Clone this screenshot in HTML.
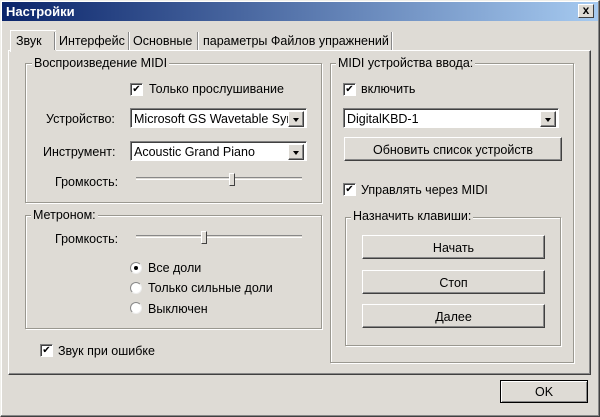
<!DOCTYPE html>
<html><head><meta charset="utf-8"><style>
*{margin:0;padding:0;box-sizing:border-box}
body{width:600px;height:417px;background:#dedbd5;font-family:"Liberation Sans","DejaVu Sans",sans-serif;font-size:11px;color:#000;position:relative;overflow:hidden}
.a{position:absolute}
.win{left:0;top:0;width:600px;height:417px;border:1px solid #f0efea;border-right-color:#404040;border-bottom-color:#404040;box-shadow:inset -1px -1px 0 #888,inset 1px 1px 0 #fff}
.title{left:2px;top:2px;width:596px;height:19px;background:linear-gradient(to right,#0a246a,#a6caf0);color:#fff;font-weight:bold;font-size:13px;padding:2px 4px}
.close{left:578px;top:4px;width:16px;height:14px;background:#dedbd5;border:1px solid #fff;border-right-color:#404040;border-bottom-color:#404040;font-weight:bold;font-size:12px;line-height:11px;text-align:center}
.panel{left:8px;top:50px;width:583px;height:325px;border:1px solid #fff;border-right-color:#404040;border-bottom-color:#404040;box-shadow:inset -1px -1px 0 #888}
.tab{top:32px;height:18px;font-size:12.5px;padding-top:2px}
.sep{top:32px;width:2px;height:18px;border-left:1px solid #888;border-right:1px solid #fff}
.grp{border:1px solid #9a9890;box-shadow:1px 1px 0 #fff, inset 1px 1px 0 #fff}
.gl{background:#dedbd5;padding:0 2px;font-size:12.5px}
.cb{width:13px;height:13px;background:#fff;border:1px solid #808080;border-right-color:#fff;border-bottom-color:#fff;box-shadow:inset 1px 1px 0 #404040;font-size:10px;line-height:11px;text-align:center;font-weight:bold}
.combo{height:20px;background:#fff;border:1px solid #808080;border-right-color:#fff;border-bottom-color:#fff;box-shadow:inset 1px 1px 0 #404040;padding:3px 3px;font-size:12.5px;white-space:nowrap;overflow:hidden}
.dd{position:absolute;right:2px;top:2px;width:16px;height:16px;background:#dedbd5;border:1px solid #fff;border-right-color:#404040;border-bottom-color:#404040;box-shadow:inset -1px -1px 0 #888}
.dd:after{content:"";position:absolute;left:4px;top:6px;border:3px solid transparent;border-top:4px solid #000;border-bottom:0}
.btn{background:#dedbd5;border:1px solid #fff;border-right-color:#404040;border-bottom-color:#404040;box-shadow:inset -1px -1px 0 #888;text-align:center;font-size:12.5px}
.line{height:3px;border-top:1px solid #888;border-bottom:1px solid #fff}
.thumb{width:6px;height:13px;border:1px solid #fff;border-right-color:#404040;border-bottom-color:#404040;background:#dedbd5}
.rb{width:12px;height:12px;border-radius:50%;background:#fff;border:1px solid #888;border-right-color:#eee;border-bottom-color:#eee}
.t{font-size:12.5px;white-space:nowrap}
</style></head><body>
<div class="a win"></div>
<div class="a title">Настройки</div>
<div class="a close">x</div>
<div class="a panel"></div>
<div class="a" style="left:10px;top:30px;width:46px;height:22px;background:#dedbd5;border-top:1px solid #fff;border-left:1px solid #fff"></div>
<div class="a tab" style="left:16px">Звук</div>
<div class="a sep" style="left:54px"></div>
<div class="a tab" style="left:59px">Интерфейс</div>
<div class="a sep" style="left:128px"></div>
<div class="a tab" style="left:133px">Основные</div>
<div class="a sep" style="left:197px"></div>
<div class="a tab" style="left:203px">параметры Файлов упражнений</div>
<div class="a sep" style="left:391px"></div>

<div class="a grp" style="left:25px;top:63px;width:297px;height:140px"></div>
<div class="a gl" style="left:32px;top:56px">Воспроизведение MIDI</div>
<div class="a cb" style="left:130px;top:83px">✔</div>
<div class="a t" style="left:149px;top:82px">Только прослушивание</div>
<div class="a t" style="left:46px;top:112px">Устройство:</div>
<div class="a combo" style="left:130px;top:108px;width:177px">Microsoft GS Wavetable Synth<div class="dd"></div></div>
<div class="a t" style="left:43px;top:145px">Инструмент:</div>
<div class="a combo" style="left:130px;top:141px;width:177px">Acoustic Grand Piano<div class="dd"></div></div>
<div class="a t" style="left:55px;top:175px">Громкость:</div>
<div class="a line" style="left:136px;top:177px;width:166px"></div>
<div class="a thumb" style="left:229px;top:173px"></div>

<div class="a grp" style="left:25px;top:215px;width:297px;height:114px"></div>
<div class="a gl" style="left:31px;top:208px">Метроном:</div>
<div class="a t" style="left:55px;top:232px">Громкость:</div>
<div class="a line" style="left:136px;top:235px;width:166px"></div>
<div class="a thumb" style="left:201px;top:231px"></div>
<div class="a rb" style="left:130px;top:262px"><div class="a" style="left:3px;top:3px;width:4px;height:4px;border-radius:50%;background:#000"></div></div>
<div class="a t" style="left:148px;top:261px">Все доли</div>
<div class="a rb" style="left:130px;top:282px"></div>
<div class="a t" style="left:148px;top:281px">Только сильные доли</div>
<div class="a rb" style="left:130px;top:302px"></div>
<div class="a t" style="left:148px;top:302px">Выключен</div>
<div class="a cb" style="left:40px;top:344px">✔</div>
<div class="a t" style="left:58px;top:344px">Звук при ошибке</div>

<div class="a grp" style="left:330px;top:63px;width:244px;height:300px"></div>
<div class="a gl" style="left:336px;top:56px">MIDI устройства ввода:</div>
<div class="a cb" style="left:343px;top:83px">✔</div>
<div class="a t" style="left:361px;top:82px">включить</div>
<div class="a combo" style="left:343px;top:108px;width:216px">DigitalKBD-1<div class="dd"></div></div>
<div class="a btn" style="left:344px;top:137px;width:218px;height:24px;padding-top:5px">Обновить список устройств</div>
<div class="a cb" style="left:343px;top:183px">✔</div>
<div class="a t" style="left:361px;top:183px">Управлять через MIDI</div>
<div class="a grp" style="left:345px;top:217px;width:216px;height:129px"></div>
<div class="a gl" style="left:351px;top:209px">Назначить клавиши:</div>
<div class="a btn" style="left:362px;top:235px;width:183px;height:24px;padding-top:5px">Начать</div>
<div class="a btn" style="left:362px;top:270px;width:183px;height:24px;padding-top:5px">Стоп</div>
<div class="a btn" style="left:362px;top:304px;width:183px;height:24px;padding-top:5px">Далее</div>

<div class="a btn" style="left:500px;top:380px;width:88px;height:23px;border:1px solid #000;box-shadow:inset 1px 1px 0 #fff,inset -1px -1px 0 #888;padding-top:4px">OK</div>
</body></html>
